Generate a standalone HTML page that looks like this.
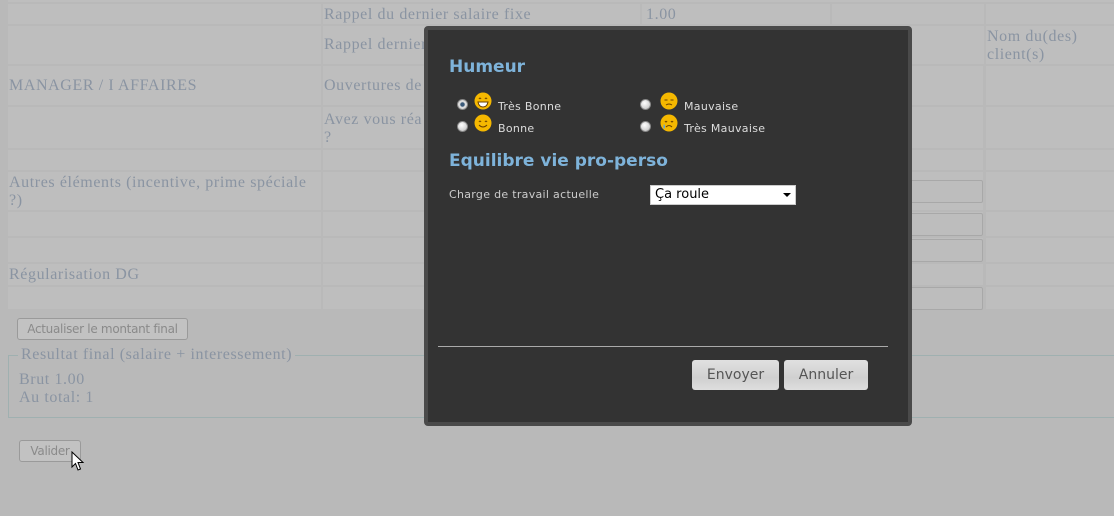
<!DOCTYPE html>
<html><head><meta charset="utf-8"><style>
*{margin:0;padding:0;box-sizing:border-box}
body{width:1114px;height:516px;background:#b9b9b9;position:relative;overflow:hidden;font-family:"Liberation Serif",serif;}
.c{position:absolute;background:#bebebe}
.t{position:absolute;color:#8a94a2;font-size:16px;letter-spacing:0.6px;line-height:18px;font-family:"Liberation Serif",serif;white-space:nowrap}
.in{position:absolute;border:1px solid #a8a8a8;border-radius:2px;background:#bdbdbd}
.btn{position:absolute;border:1px solid #9a9a9a;border-radius:3px;background:#c2c2c2;color:#8a8a8a;font:12px "DejaVu Sans",sans-serif;text-align:center;letter-spacing:-0.3px}
#m{position:absolute;left:424px;top:26px;width:488px;height:400px;background:#333;border:4px solid #4a4a4a;border-radius:4px}
.h{position:absolute;color:#7eb3da;font:bold 17px "DejaVu Sans",sans-serif}
.l{position:absolute;color:#ddd;font:11px "DejaVu Sans",sans-serif;letter-spacing:0.3px}
.r{position:absolute;width:11px;height:11px;border-radius:50%;background:radial-gradient(circle at 40% 35%,#fff,#bbb);border:1px solid #888}
.e{position:absolute}
.mb{position:absolute;top:330px;height:30px;border-radius:3px;background:linear-gradient(#e0e0e0,#d0d0d0 60%,#dedede);color:#555;font:14px "DejaVu Sans",sans-serif;text-align:center;line-height:30px}
</style></head><body>
<div class="c" style="left:8px;top:0;width:1106px;height:2px"></div>
<div class="c" style="left:8px;top:4px;width:313px;height:20px"></div><div class="c" style="left:323px;top:4px;width:317px;height:20px"></div><div class="c" style="left:642px;top:4px;width:188px;height:20px"></div><div class="c" style="left:832px;top:4px;width:152px;height:20px"></div><div class="c" style="left:986px;top:4px;width:128px;height:20px"></div>
<div class="c" style="left:8px;top:26px;width:313px;height:38px"></div><div class="c" style="left:323px;top:26px;width:317px;height:38px"></div><div class="c" style="left:832px;top:26px;width:152px;height:38px"></div><div class="c" style="left:986px;top:26px;width:128px;height:38px"></div>
<div class="c" style="left:8px;top:66px;width:313px;height:39px"></div><div class="c" style="left:323px;top:66px;width:660px;height:39px"></div><div class="c" style="left:986px;top:66px;width:128px;height:39px"></div>
<div class="c" style="left:8px;top:107px;width:313px;height:41px"></div><div class="c" style="left:323px;top:107px;width:660px;height:41px"></div><div class="c" style="left:986px;top:107px;width:128px;height:41px"></div>
<div class="c" style="left:8px;top:150px;width:313px;height:20px"></div><div class="c" style="left:323px;top:150px;width:660px;height:20px"></div><div class="c" style="left:986px;top:150px;width:128px;height:20px"></div>
<div class="c" style="left:8px;top:172px;width:313px;height:38px"></div><div class="c" style="left:323px;top:172px;width:660px;height:38px"></div><div class="c" style="left:986px;top:172px;width:128px;height:38px"></div>
<div class="c" style="left:8px;top:212px;width:313px;height:24px"></div><div class="c" style="left:323px;top:212px;width:660px;height:24px"></div><div class="c" style="left:986px;top:212px;width:128px;height:24px"></div>
<div class="c" style="left:8px;top:238px;width:313px;height:24px"></div><div class="c" style="left:323px;top:238px;width:660px;height:24px"></div><div class="c" style="left:986px;top:238px;width:128px;height:24px"></div>
<div class="c" style="left:8px;top:264px;width:313px;height:21px"></div><div class="c" style="left:323px;top:264px;width:660px;height:21px"></div><div class="c" style="left:986px;top:264px;width:128px;height:21px"></div>
<div class="c" style="left:8px;top:287px;width:313px;height:22px"></div><div class="c" style="left:323px;top:287px;width:660px;height:22px"></div><div class="c" style="left:986px;top:287px;width:128px;height:22px"></div>
<div class="in" style="left:840px;top:180px;width:143px;height:23px"></div>
<div class="in" style="left:840px;top:213px;width:143px;height:23px"></div>
<div class="in" style="left:840px;top:239px;width:143px;height:23px"></div>
<div class="in" style="left:840px;top:287px;width:143px;height:23px"></div>
<div class="t" style="left:324px;top:6px">Rappel du dernier salaire fixe</div>
<div class="t" style="left:646px;top:6px">1.00</div>
<div class="t" style="left:324px;top:36px">Rappel dernier</div>
<div class="t" style="left:987px;top:28px">Nom du(des)<br>client(s)</div>
<div class="t" style="left:9px;top:77px">MANAGER / I AFFAIRES</div>
<div class="t" style="left:324px;top:77px">Ouvertures de</div>
<div class="t" style="left:324px;top:111px">Avez vous réa<br>?</div>
<div class="t" style="left:9px;top:174px">Autres éléments (incentive, prime spéciale<br>?)</div>
<div class="t" style="left:9px;top:266px">Régularisation DG</div>
<div class="btn" style="left:17px;top:318px;width:171px;height:22px;line-height:20px">Actualiser le montant final</div>
<div style="position:absolute;left:8px;top:355px;width:1120px;height:63px;border:1px solid #9fb0b0"></div>
<div class="t" style="left:18px;top:346px;background:#b9b9b9;padding:0 3px">Resultat final (salaire + interessement)</div>
<div class="t" style="left:19px;top:371px">Brut 1.00<br>Au total: 1</div>
<div class="btn" style="left:19px;top:440px;width:62px;height:22px;line-height:20px">Valider</div>
<svg style="position:absolute;left:71px;top:451px" width="14" height="21" viewBox="0 0 14 21"><path d="M1 1 L1 16 L4.5 12.5 L7 19 L9.5 18 L7 11.5 L12 11.5 Z" fill="#fff" stroke="#000" stroke-width="1"/></svg>
<div id="m">
<div class="h" style="left:21px;top:27px">Humeur</div>
<div class="r" style="left:29px;top:69px;background:radial-gradient(circle,#3a5a7a 30%,#ddd 40%)"></div>
<svg class="e" style="left:46px;top:62px" width="18" height="18" viewBox="0 0 18 18"><circle cx="9" cy="9" r="8.5" fill="#f5b800"/><path d="M5 7 Q6 5 7 7 M11 7 Q12 5 13 7" stroke="#6a4000" fill="none"/><path d="M4 10 H14 Q13 15 9 15 Q5 15 4 10Z" fill="#fff" stroke="#6a4000"/></svg>
<div class="l" style="left:70px;top:70px">Très Bonne</div>
<div class="r" style="left:29px;top:91px"></div>
<svg class="e" style="left:46px;top:84px" width="18" height="18" viewBox="0 0 18 18"><circle cx="9" cy="9" r="8.5" fill="#f5b800"/><path d="M5 8 Q6 6 7 8 M11 8 Q12 6 13 8 M5 11 Q9 15 13 11" stroke="#6a4000" fill="none"/></svg>
<div class="l" style="left:70px;top:92px">Bonne</div>
<div class="r" style="left:212px;top:69px"></div>
<svg class="e" style="left:232px;top:62px" width="18" height="18" viewBox="0 0 18 18"><circle cx="9" cy="9" r="8.5" fill="#f5b800"/><path d="M4.5 8 H7.5 M10.5 8 H13.5 M6 13 Q9 11 12 13" stroke="#6a4000" fill="none"/></svg>
<div class="l" style="left:256px;top:70px">Mauvaise</div>
<div class="r" style="left:212px;top:91px"></div>
<svg class="e" style="left:232px;top:84px" width="18" height="18" viewBox="0 0 18 18"><circle cx="9" cy="9" r="8.5" fill="#f5b800"/><path d="M5 7 Q6 9 7 7 M11 7 Q12 9 13 7 M6 13 Q9 10 12 13" stroke="#6a4000" fill="none"/><path d="M4 10 Q3 13 4 15 Q6 13 4 10Z" fill="#4aa0ff"/></svg>
<div class="l" style="left:256px;top:92px">Très Mauvaise</div>
<div class="h" style="left:21px;top:121px">Equilibre vie pro-perso</div>
<div class="l" style="left:21px;top:158px;color:#ccc">Charge de travail actuelle</div>
<div style="position:absolute;left:222px;top:155px;width:146px;height:20px;background:#fff;border:1px solid #ccc;font:13px 'DejaVu Sans',sans-serif;color:#000;padding-left:4px;line-height:18px">Ça roule<span style="position:absolute;right:4px;top:7px;border:4px solid transparent;border-top:4px solid #000;border-bottom:none"></span></div>
<div style="position:absolute;left:10px;top:316px;width:450px;height:1px;background:#aaa"></div>
<div class="mb" style="left:264px;width:87px">Envoyer</div>
<div class="mb" style="left:356px;width:84px">Annuler</div>
</div>
</body></html>
